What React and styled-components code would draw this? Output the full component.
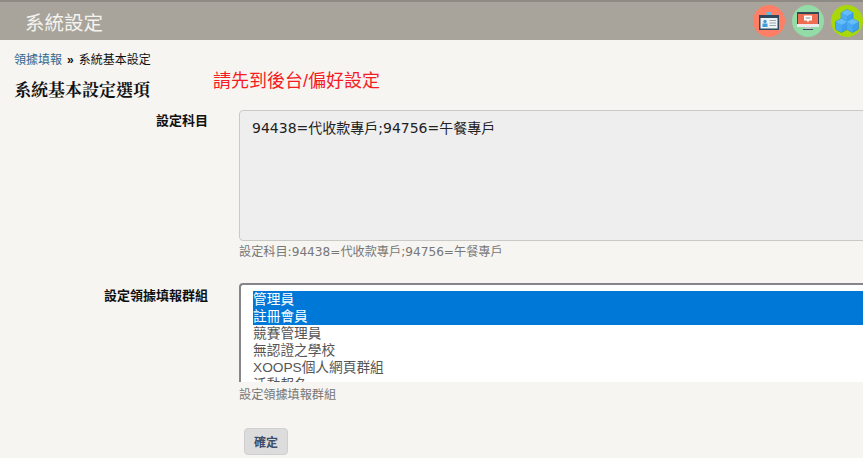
import React from 'react';
import styled, { createGlobalStyle } from 'styled-components';

const CJK = `"Liberation Sans", "Noto Sans CJK TC", sans-serif`;

const GlobalStyle = createGlobalStyle`
  html, body {
    margin: 0;
    padding: 0;
    width: 863px;
    height: 458px;
    overflow: hidden;
    background: #f6f5f1;
    font-family: ${CJK};
  }
`;

const Page = styled.div`
  width: 863px;
  height: 458px;
  overflow: hidden;
`;

// top bar
const TopBar = styled.header`
  height: 38px;
  border-top: 2px solid #8e8b84;
  background: #a8a49b;
  display: flex;
  align-items: center;
  justify-content: space-between;
  padding: 0 0 0 25px;
`;

const BarTitle = styled.div`
  color: #f4f3ef;
  font-size: 19.5px;
`;

const IconRow = styled.div`
  display: flex;
  gap: 7px;
`;

const Circle = styled.div`
  width: 32px;
  height: 32px;
  border-radius: 50%;
  background: ${(p) => p.$bg};
  display: flex;
  align-items: center;
  justify-content: center;
`;

const Content = styled.main`
  padding: 12px 0 0 14px;
`;

const Crumbs = styled.nav`
  font-size: 12px;
  line-height: 16px;
  color: #111;
  display: flex;
  gap: 5px;
  a {
    color: #33688f;
    text-decoration: none;
  }
  b {
    font-weight: bold;
  }
`;

const HeadingRow = styled.div`
  display: flex;
  align-items: flex-start;
  height: 32px;
`;

const Heading = styled.h2`
  margin: 13px 0 0 0;
  width: 199px;
  font-family: "Liberation Serif", "Noto Serif CJK TC", "Noto Sans CJK TC", serif;
  font-size: 17px;
  line-height: 20px;
  font-weight: bold;
  color: #111;
`;

const Notice = styled.div`
  margin-top: 1px;
  color: #f51c24;
  font-size: 18px;
  line-height: 24px;
`;

const FormRow = styled.div`
  display: flex;
  margin-left: -14px;
  margin-top: ${(p) => p.$top}px;
`;

const Label = styled.label`
  width: 208px;
  flex: none;
  text-align: right;
  font-size: 13px;
  line-height: 16px;
  font-weight: bold;
  color: #111;
  padding-top: ${(p) => p.$pad}px;
`;

const Field = styled.div`
  margin-left: 31px;
  flex: none;
  width: 700px;
`;

const SubjectBox = styled.div`
  box-sizing: border-box;
  height: 131px;
  padding: 9px 12px;
  background: #eeeeee;
  border: 1px solid #c9c9c6;
  border-radius: 4px;
  font-family: "DejaVu Sans", "Noto Sans CJK TC", sans-serif;
  font-size: 14px;
  line-height: 17px;
  color: #222;
`;

const Help = styled.div`
  margin-top: ${(p) => p.$top}px;
  font-family: "DejaVu Sans", "Noto Sans CJK TC", sans-serif;
  font-size: 12.15px;
  line-height: 15px;
  color: #777;
`;

const GroupList = styled.div`
  box-sizing: border-box;
  height: 99px;
  overflow: hidden;
  background: #fff;
  border-top: 2px solid #85858a;
  border-left: 2px solid #85858a;
  border-top-left-radius: 4px;
  padding: 6px 0 0 12px;
`;

const GroupItem = styled.div`
  height: 17px;
  font-size: 13.7px;
  line-height: 17px;
  white-space: nowrap;
  background: ${(p) => (p.$selected ? '#0078d7' : 'transparent')};
  color: ${(p) => (p.$selected ? '#fff' : '#555')};
`;

const Actions = styled.div`
  margin: 25px 0 0 230px;
`;

const Submit = styled.button`
  display: block;
  box-sizing: border-box;
  width: 44px;
  height: 27px;
  padding: 0;
  background: #dcdcdc;
  border: 1px solid #cfcfcf;
  border-radius: 4px;
  font-family: ${CJK};
  font-size: 12px;
  font-weight: bold;
  color: #3c4f6b;
`;

const groups = [
  { name: '管理員', selected: true },
  { name: '註冊會員', selected: true },
  { name: '競賽管理員' },
  { name: '無認證之學校' },
  { name: 'XOOPS個人網頁群組' },
  { name: '活動報名' },
];

function IdCardIcon() {
  return (
    <svg width="20" height="18" viewBox="0 0 20 18">
      <rect x="7.5" y="0" width="5" height="4" fill="#62bde6" />
      <rect x="0" y="3" width="20" height="15" fill="#2f4a5e" />
      <rect x="1.500" y="6" width="17" height="10.500" fill="#eef3f6" />
      <circle cx="6" cy="9.500" r="1.700" fill="#3f9bdc" />
      <rect x="3.500" y="11.500" width="5" height="3.500" fill="#3f9bdc" />
      <rect x="10.500" y="8" width="6.500" height="1" fill="#9aa8b2" />
      <rect x="10.500" y="10.500" width="6.500" height="1" fill="#9aa8b2" />
      <rect x="10.500" y="13" width="6.500" height="1" fill="#9aa8b2" />
    </svg>
  );
}

function MonitorIcon() {
  return (
    <svg width="22" height="18" viewBox="0 0 22 18">
      <rect x="0" y="0" width="22" height="12" fill="#33475a" />
      <rect x="1" y="2" width="20" height="10" fill="#ee6c50" />
      <rect x="0" y="12" width="22" height="3" fill="#e8eaec" />
      <rect x="8" y="15" width="6" height="2" fill="#c5c9cc" />
      <rect x="6" y="17" width="10" height="1" fill="#33475a" />
      <path d="M7 3.500h8v5h-2.800L11 10.500 9.800 8.500H7z" fill="#fff" />
      <rect x="8.500" y="5.500" width="5" height="1" fill="#8a8f94" />
    </svg>
  );
}

function Cube({ x, y }) {
  return (
    <g transform={`translate(${x} ${y})`}>
      <path d="M6 0l6 3.300v7.400L6 14 0 10.700V3.300z" fill="#3d9fee" stroke="#2b7fc9" strokeWidth="0.6" />
      <path d="M6 0l6 3.300-6 3.300-6-3.300z" fill="#62bdf8" />
      <path d="M6 6.600V14L0 10.700V3.300z" fill="#4aaaf2" />
    </g>
  );
}

function CubesIcon() {
  return (
    <svg width="24" height="24" viewBox="0 0 24 24">
      <Cube x={6} y={0.500} />
      <Cube x={0.500} y={9.500} />
      <Cube x={11.500} y={9.500} />
    </svg>
  );
}

export default function App() {
  return (
    <Page>
      <GlobalStyle />
      <TopBar>
        <BarTitle>系統設定</BarTitle>
        <IconRow>
          <Circle $bg="#ff7f66"><IdCardIcon /></Circle>
          <Circle $bg="#93dca8"><MonitorIcon /></Circle>
          <Circle $bg="#a8d80a"><CubesIcon /></Circle>
        </IconRow>
      </TopBar>
      <Content>
        <Crumbs>
          <a href="#top">領據填報</a>
          <b>»</b>
          <span>系統基本設定</span>
        </Crumbs>
        <HeadingRow>
          <Heading>系統基本設定選項</Heading>
          <Notice>請先到後台/偏好設定</Notice>
        </HeadingRow>
        <FormRow $top={10}>
          <Label $pad={3}>設定科目</Label>
          <Field>
            <SubjectBox>94438=代收款專戶;94756=午餐專戶</SubjectBox>
            <Help $top={4}>設定科目:94438=代收款專戶;94756=午餐專戶</Help>
          </Field>
        </FormRow>
        <FormRow $top={23}>
          <Label $pad={5}>設定領據填報群組</Label>
          <Field>
            <GroupList>
              {groups.map((g) => (
                <GroupItem key={g.name} $selected={g.selected}>{g.name}</GroupItem>
              ))}
            </GroupList>
            <Help $top={6}>設定領據填報群組</Help>
          </Field>
        </FormRow>
        <Actions>
          <Submit type="button">確定</Submit>
        </Actions>
      </Content>
    </Page>
  );
}
